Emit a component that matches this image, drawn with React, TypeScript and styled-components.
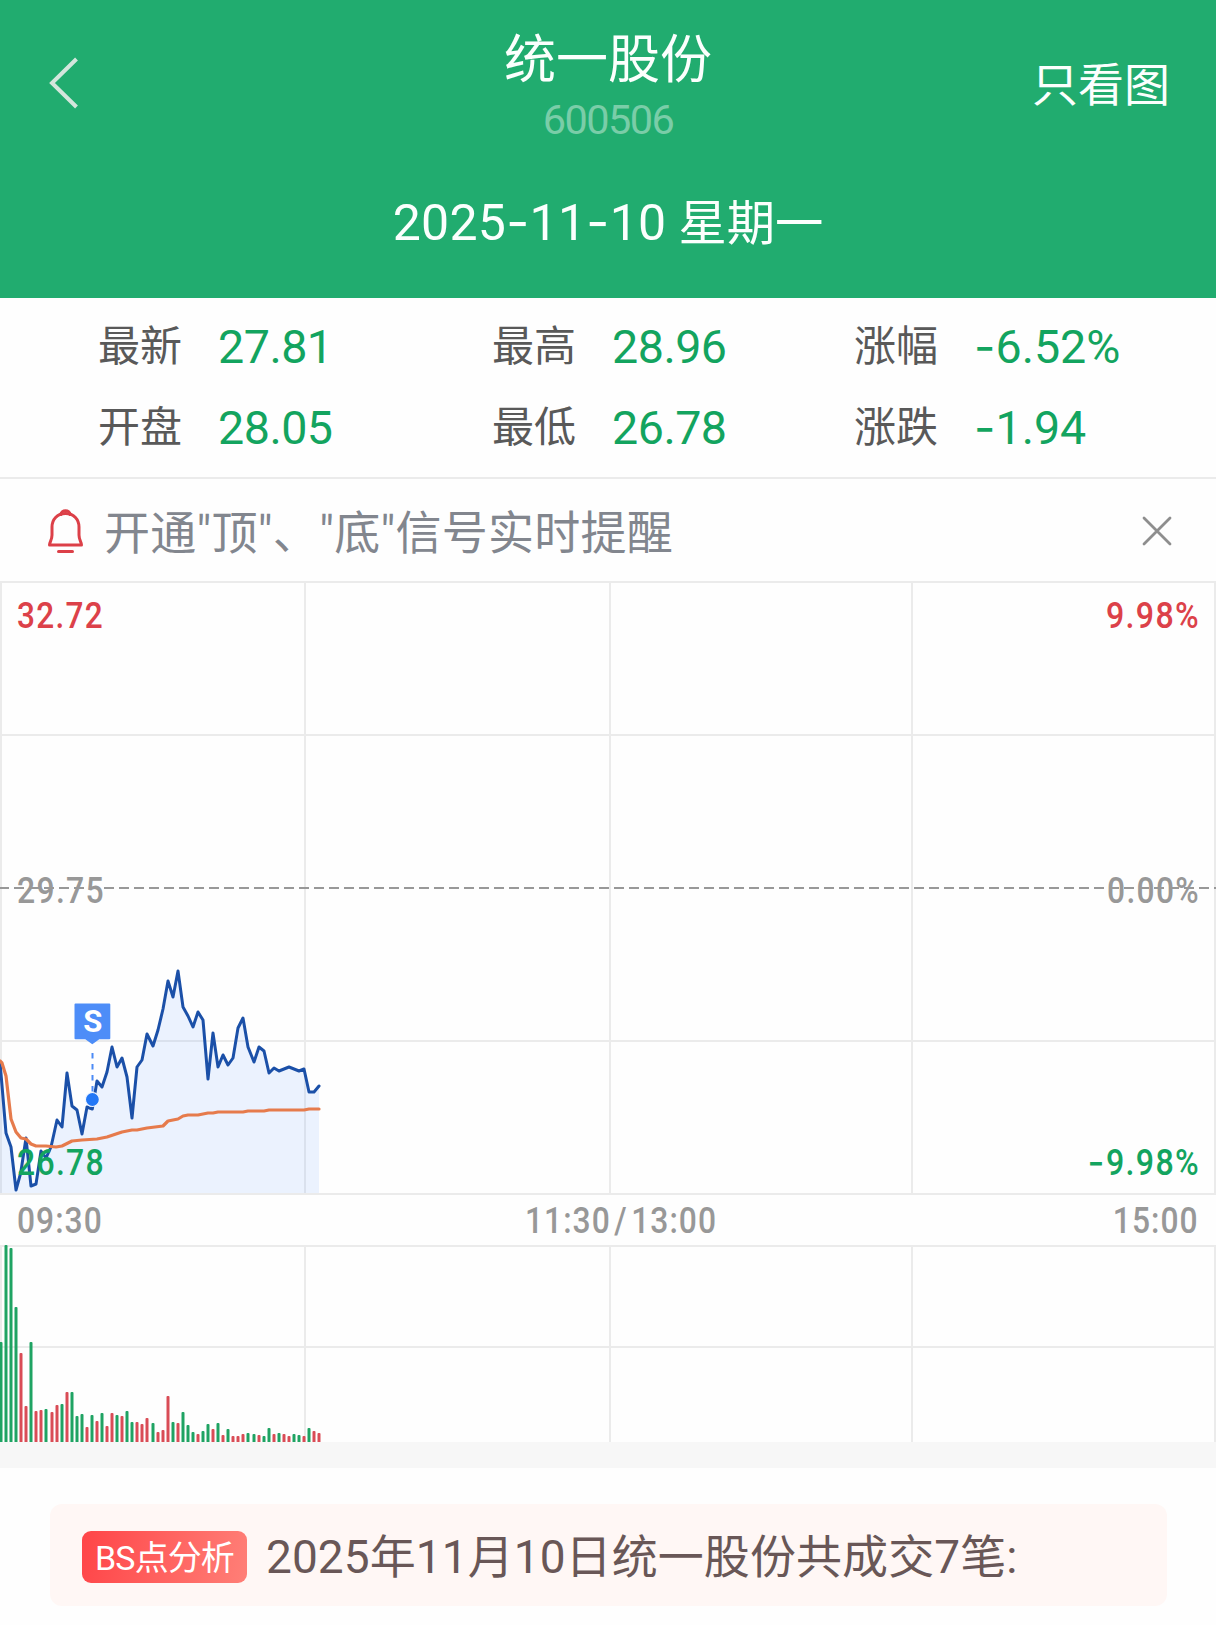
import React from 'react';
import styled, { createGlobalStyle } from 'styled-components';

const GlobalStyle = createGlobalStyle`
  * { box-sizing: border-box; }
  body {
    margin: 0;
    background: #fefefe;
    font-family: Roboto, 'Noto Sans CJK SC', sans-serif;
  }
`;

const GREEN = '#13a45f';
const RED = '#dc4149';
const GREY = '#989898';
const GRID = '#ebebeb';

const Page = styled.main`
  width: 1216px;
  height: 1625px;
  overflow: hidden;
  display: flex;
  flex-direction: column;
`;

const Header = styled.header`
  height: 298px;
  flex: none;
  background: #21ac6f;
  color: #fbfffd;
  display: flex;
  flex-direction: column;
`;

const NavBar = styled.div`
  height: 167px;
  display: grid;
  grid-template-columns: 300px 1fr 300px;
`;

const BackButton = styled.button`
  border: 0;
  padding: 55px 0 0 46px;
  background: none;
  display: flex;
  align-items: flex-start;
`;

const TitleBlock = styled.div`
  display: flex;
  flex-direction: column;
  align-items: center;
  padding-top: 31px;
`;

const Title = styled.h1`
  margin: 0;
  font-size: 52px;
  line-height: 60px;
  font-weight: 400;
`;

const Code = styled.div`
  margin-top: 4px;
  font-size: 41.5px;
  line-height: 50px;
  letter-spacing: -1.6px;
  color: #7acda8;
`;

const ChartOnly = styled.button`
  border: 0;
  background: none;
  color: inherit;
  font: inherit;
  font-size: 46px;
  line-height: 60px;
  padding: 55px 46px 0 0;
  text-align: right;
  align-self: start;
`;

const DateLine = styled.div`
  font-size: 48.3px;
  line-height: 60px;
  padding-top: 25px;
  text-align: center;
  white-space: pre;
`;

const DateDigits = styled.span`
  font-size: 50px;
  letter-spacing: 0.3px;
`;

const Dash = styled.span`
  font-family: Inter, sans-serif;
`;

const Stats = styled.section`
  height: 181px;
  flex: none;
  border-bottom: 2px solid ${GRID};
  padding: 6px 0 0 98px;
  display: grid;
  grid-template-columns: 394px 362px 1fr;
  grid-template-rows: 81px 81px;
`;

const Stat = styled.div`
  display: flex;
  align-items: center;
  gap: 36px;
`;

const StatLabel = styled.span`
  font-size: 42px;
  line-height: 60px;
  padding-top: 4px;
  color: #595959;
`;

const StatValue = styled.span<{ $signed: boolean }>`
  font-size: 46.6px;
  line-height: 60px;
  letter-spacing: ${(p) => (p.$signed ? 0 : -0.5)}px;
  padding-top: ${(p) => (p.$signed ? 3 : 4)}px;
  color: ${GREEN};
`;

const Notice = styled.section`
  height: 102px;
  flex: none;
  display: flex;
  align-items: center;
  padding: 2px 43px 0 46px;
`;

const NoticeText = styled.div`
  flex: 1;
  margin-left: 18px;
  padding-top: 4px;
  font-size: 46px;
  line-height: 60px;
  letter-spacing: 0.28px;
  color: #82868e;
`;

const ChartSvg = styled.svg`
  display: block;
  flex: none;
`;

const TimeAxis = styled.div`
  height: 50px;
  flex: none;
  display: grid;
  grid-template-columns: 508px 1fr auto;
  align-items: center;
  padding: 2px 17px 0 17px;
  font-size: 36.5px;
  font-weight: 500;
  line-height: 44px;
  color: ${GREY};
`;

const TimeLabel = styled.span<{ $origin?: string }>`
  letter-spacing: 1.2px;
  transform: scaleX(0.87);
  transform-origin: ${(p) => p.$origin ?? 'left'} center;
`;

const Slash = styled.span`
  margin: 0 4px;
`;

const Divider = styled.div`
  height: 26px;
  flex: none;
  background: #f7f7f7;
`;

const Card = styled.section`
  margin: 36px 49px 0 50px;
  height: 102px;
  flex: none;
  border-radius: 12px;
  background: #fff7f5;
  display: flex;
  align-items: center;
  padding: 4px 0 0 32px;
`;

const Badge = styled.span`
  width: 165px;
  height: 52px;
  border-radius: 9px;
  background: linear-gradient(100deg, #ff4548, #ff7f77);
  color: #fff;
  font-size: 34px;
  line-height: 55px;
  letter-spacing: -0.9px;
  text-align: center;
`;

const CardText = styled.span`
  margin-left: 19px;
  font-size: 46px;
  line-height: 60px;
  letter-spacing: 0.08px;
  color: #695757;
`;

const AxisText = styled.text`
  font-size: 36.5px;
  font-weight: 500;
  letter-spacing: 1.5px;
`;

const columns = [
  [['最新', '27.81'], ['开盘', '28.05']],
  [['最高', '28.96'], ['最低', '26.78']],
  [['涨幅', '-6.52%'], ['涨跌', '-1.94']],
];

// Minute prices as [x, y] in chart pixels.
const price: [number, number][] = [
  [0, 481], [6, 552], [11, 566], [16, 609], [20.7, 592], [26, 557], [31, 605], [36, 603], [41, 570],
  [46, 577], [51, 566], [57, 539], [62, 546], [67, 492], [72, 525], [77, 529], [82, 553], [87, 526],
  [92.3, 528], [97, 500], [102, 506], [107, 491], [112, 466], [117, 486], [122, 477], [127, 496],
  [132, 537], [137, 486], [142, 479], [147, 453], [153, 465], [158, 449], [163, 428], [168, 400],
  [173, 416], [178, 390], [183, 426], [188, 435], [193, 446], [198, 431], [203, 439], [208, 498],
  [213, 452], [218, 486], [223, 474], [228, 484], [233, 477], [238, 447], [243, 437], [248, 466],
  [254, 481], [259, 466], [264, 470], [269, 492], [274, 487], [279, 490], [284, 488], [289, 486],
  [294, 488], [299, 490], [304, 488], [309, 511], [314, 511], [319, 505],
];

const average: [number, number][] = [
  [0, 480], [2, 482], [6, 495], [11, 538], [16, 551], [21, 557], [26, 558], [31, 563], [36, 565],
  [46, 565], [56, 566], [62, 565], [72, 560], [82, 559], [97, 558], [107, 556], [122, 551],
  [132, 549], [137, 549], [147, 547], [163, 545], [168, 540], [178, 538], [183, 535], [188, 534],
  [198, 534], [208, 532], [213, 532], [218, 531], [243, 531], [248, 530], [264, 530], [269, 529],
  [304, 529], [309, 528], [319, 528],
];

// One bar per minute: height and direction (g falling, r rising).
const volumes =
  '100g 197g 194g 135g 89r 36r 100g 31r 32r 33g 30r 37r 38g 50r 50g 26g 28g 15r 27g 21r 29g 16r 29r 27g 26r 31g 20g 20r 18r 24r 19g 10r 12r 46r 20g 19r 30g 17g 10g 8r 11g 18g 13r 19g 7r 13g 6r 6r 8r 9g 8g 7r 6g 14g 8r 9g 8r 6r 8g 7g 6r 14g 11r 9r'
    .split(' ')
    .map((v, i) => ({
      x: 1 + i * 5 + (i > 9 ? 1 : 0) + (i > 29 ? 1 : 0) + (i > 49 ? 1 : 0),
      h: parseInt(v, 10),
      color: v.endsWith('g') ? '#1fa363' : '#d94c56',
    }));

const toPoints = (list: [number, number][]) => list.map((p) => p.join(',')).join(' ');

const WithDash = ({ text }: { text: string }) => (
  <>
    {text.split(/(-)/).map((part, i) => (part === '-' ? <Dash key={i}>-</Dash> : part))}
  </>
);

const Grid = ({ rows, bottom }: { rows: number[]; bottom: number }) => (
  <g fill={GRID}>
    {[0, 304, 609, 911, 1214].map((x) => (
      <rect key={x} x={x} y={0} width={2} height={bottom} />
    ))}
    {rows.map((y) => (
      <rect key={y} x={0} y={y} width={1216} height={2} />
    ))}
  </g>
);

const axisLabels = [
  { x: 17, y: 47, width: 87, color: RED, text: '32.72' },
  { x: 17, y: 322, width: 88, color: GREY, text: '29.75' },
  { x: 17, y: 594, width: 88, color: GREEN, text: '26.78' },
  { x: 1106, y: 47, width: 94, color: RED, text: '9.98%' },
  { x: 1107, y: 322, width: 93, color: GREY, text: '0.00%' },
  { x: 1106, y: 594, width: 94, color: GREEN, text: '9.98%' },
];

const PriceChart = () => (
  <ChartSvg width={1216} height={614} viewBox="0 0 1216 614">
    <Grid rows={[0, 153, 459, 612]} bottom={614} />
    <line x1={-2} x2={1216} y1={307} y2={307} stroke={GREY} strokeWidth={2} strokeDasharray="10 5" strokeDashoffset={-1} />
    <polygon points={`0,612 ${toPoints(price)} 319,612`} fill="#4a8cff" fillOpacity={0.105} />
    <polyline points={toPoints(price)} fill="none" stroke="#1b50a8" strokeWidth={3} strokeLinejoin="round" strokeLinecap="round" />
    <polyline points={toPoints(average)} fill="none" stroke="#e67b4c" strokeWidth={3.2} strokeLinejoin="round" strokeLinecap="round" />
    <line x1={92.5} x2={92.5} y1={472} y2={512} stroke="#4b8af5" strokeWidth={2} strokeDasharray="5.5 5.5" />
    <circle cx={92.4} cy={518.5} r={7} fill="#2277f6" stroke="#f4f8ff" strokeWidth={1.2} />
    <path d="M75.5 422.5h33.8q1 0 1 1v33.7q0 1-1 1h-10l-7 5-7-5h-9.8q-1 0-1-1v-33.7q0-1 1-1z" fill="#4d8df8" />
    <text x={92.7} y={451} fontSize={31} fontWeight={700} fill="#fff" textAnchor="middle">S</text>
    {axisLabels.map((l) => (
      <AxisText key={`${l.x}-${l.y}`} x={l.x} y={l.y} fill={l.color} textLength={l.width} lengthAdjust="spacingAndGlyphs">
        {l.text}
      </AxisText>
    ))}
    <text x={1087.5} y={594} fill={GREEN} fontSize={36.5} fontWeight={500} fontFamily="Inter, sans-serif">-</text>
  </ChartSvg>
);

const VolumeChart = () => (
  <ChartSvg width={1216} height={197} viewBox="0 0 1216 197">
    <Grid rows={[0, 101]} bottom={197} />
    {volumes.map((b) => (
      <rect key={b.x} x={b.x - 1.5} y={197 - b.h} width={3} height={b.h + 2} rx={1} fill={b.color} />
    ))}
  </ChartSvg>
);

export default function App() {
  return (
    <Page>
      <GlobalStyle />
      <Header>
        <NavBar>
          <BackButton aria-label="返回">
            <svg width="36" height="56" viewBox="0 0 36 56" fill="none" stroke="#d3e6dc" strokeWidth="4">
              <path d="M30.5 4 6 28l24.500 24" />
            </svg>
          </BackButton>
          <TitleBlock>
            <Title>统一股份</Title>
            <Code>600506</Code>
          </TitleBlock>
          <ChartOnly>只看图</ChartOnly>
        </NavBar>
        <DateLine>
          <DateDigits><WithDash text="2025-11-10" /></DateDigits> 星期一
        </DateLine>
      </Header>
      <Stats>
        {[0, 1].map((row) =>
          columns.map((col) => (
            <Stat key={col[row][0]}>
              <StatLabel>{col[row][0]}</StatLabel>
              <StatValue $signed={col[row][1].startsWith('-')}><WithDash text={col[row][1]} /></StatValue>
            </Stat>
          )),
        )}
      </Stats>
      <Notice>
        <svg width="40" height="48" viewBox="0 0 40 48" fill="none" stroke="#dc4048" strokeWidth="3" strokeLinejoin="round" strokeLinecap="round">
          <path d="M15 7.500C15 2.500 24 2.500 24 7.500" />
          <path d="M19.500 6.500C11 6.500 6 12.500 6 20V28C6 33 3.500 35 3.500 38H35.500C35.500 35 33 33 33 28V20C33 12.500 28 6.500 19.500 6.500Z" />
          <path d="M12.500 44.500h14" />
        </svg>
        <NoticeText>开通"顶"、"底"信号实时提醒</NoticeText>
        <svg width="32" height="32" viewBox="0 0 32 32" stroke="#8e8e8e" strokeWidth="2.800" strokeLinecap="round">
          <path d="M3 3 29 29M29 3 3 29" />
        </svg>
      </Notice>
      <PriceChart />
      <TimeAxis>
        <TimeLabel>09:30</TimeLabel>
        <TimeLabel>11:30<Slash>/</Slash>13:00</TimeLabel>
        <TimeLabel $origin="right">15:00</TimeLabel>
      </TimeAxis>
      <VolumeChart />
      <Divider />
      <Card>
        <Badge>BS点分析</Badge>
        <CardText>2025年11月10日统一股份共成交7笔:</CardText>
      </Card>
    </Page>
  );
}
